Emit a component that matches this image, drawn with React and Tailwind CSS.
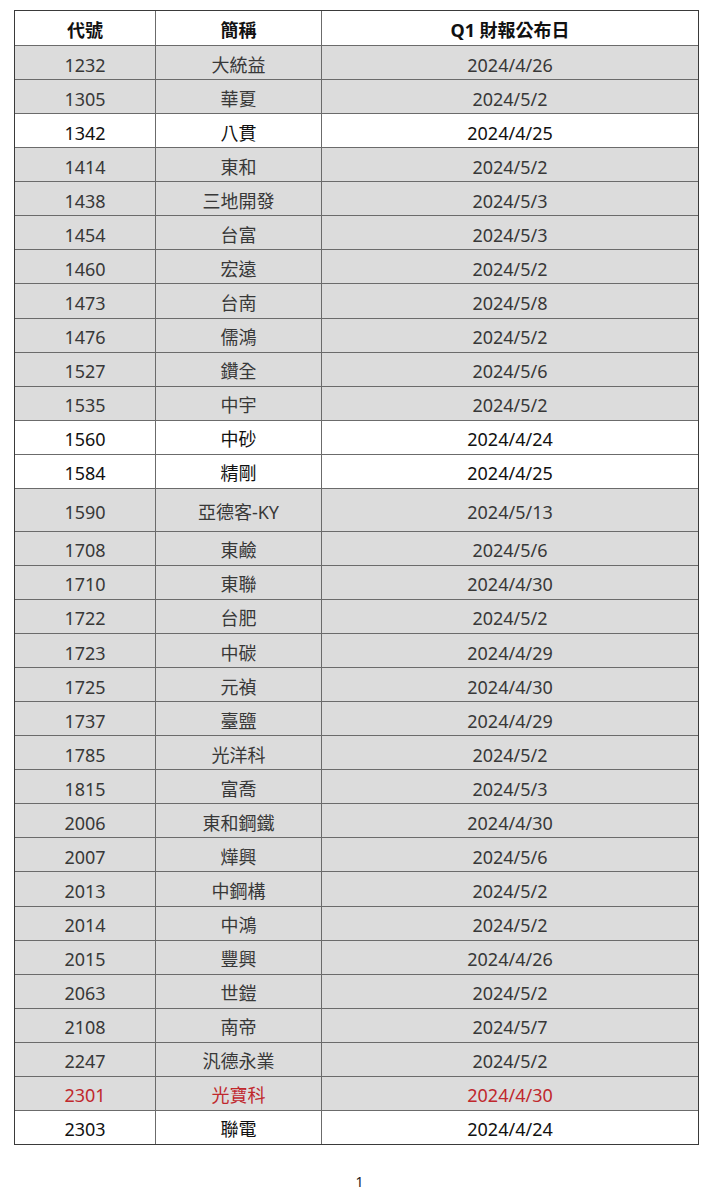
import React from "react"

const rows = [
  ["1232", "大統益", "2024/4/26", "g"],
  ["1305", "華夏", "2024/5/2", "g"],
  ["1342", "八貫", "2024/4/25", "w"],
  ["1414", "東和", "2024/5/2", "g"],
  ["1438", "三地開發", "2024/5/3", "g"],
  ["1454", "台富", "2024/5/3", "g"],
  ["1460", "宏遠", "2024/5/2", "g"],
  ["1473", "台南", "2024/5/8", "g"],
  ["1476", "儒鴻", "2024/5/2", "g"],
  ["1527", "鑽全", "2024/5/6", "g"],
  ["1535", "中宇", "2024/5/2", "g"],
  ["1560", "中砂", "2024/4/24", "w"],
  ["1584", "精剛", "2024/4/25", "w"],
  ["1590", "亞德客-KY", "2024/5/13", "g"],
  ["1708", "東鹼", "2024/5/6", "g"],
  ["1710", "東聯", "2024/4/30", "g"],
  ["1722", "台肥", "2024/5/2", "g"],
  ["1723", "中碳", "2024/4/29", "g"],
  ["1725", "元禎", "2024/4/30", "g"],
  ["1737", "臺鹽", "2024/4/29", "g"],
  ["1785", "光洋科", "2024/5/2", "g"],
  ["1815", "富喬", "2024/5/3", "g"],
  ["2006", "東和鋼鐵", "2024/4/30", "g"],
  ["2007", "燁興", "2024/5/6", "g"],
  ["2013", "中鋼構", "2024/5/2", "g"],
  ["2014", "中鴻", "2024/5/2", "g"],
  ["2015", "豐興", "2024/4/26", "g"],
  ["2063", "世鎧", "2024/5/2", "g"],
  ["2108", "南帝", "2024/5/7", "g"],
  ["2247", "汎德永業", "2024/5/2", "g"],
  ["2301", "光寶科", "2024/4/30", "r"],
  ["2303", "聯電", "2024/4/24", "w"],
]

const font = { fontFamily: '"Noto Sans", "Noto Sans CJK TC", sans-serif' }

const App = () => {
  return (
    <div className="min-h-[1203px] w-[719px] bg-white pt-[10px]" style={font}>
      <div className="mx-[14px] w-[685px] border border-[#3a3a3a]">
        <div className="grid h-[34px] grid-cols-[141px_166px_1fr] items-center bg-white text-[18px] font-bold text-[#111]">
          <div className="flex h-full items-center justify-center border-r border-[#6b6b6b] pt-[5px]">代號</div>
          <div className="flex h-full items-center justify-center border-r border-[#6b6b6b] pt-[5px]">簡稱</div>
          <div className="flex h-full items-center justify-center pt-[5px]">Q1 財報公布日</div>
        </div>
        {rows.map(([code, name, date, kind]) => (
          <div
            key={code}
            className={`grid grid-cols-[141px_166px_1fr] items-center border-t border-[#6b6b6b] text-[18px] ${
              code === "1590" ? "h-[43px]" : "h-[34.07px]"
            } ${kind === "w" ? "bg-white text-[#111]" : "bg-[#dcdcdc] text-[#383838]"} ${
              kind === "r" ? "text-[#c0282d]" : ""
            }`}
          >
            <div className="flex h-full items-center justify-center border-r border-[#6b6b6b] pt-[5px]">{code}</div>
            <div className="flex h-full items-center justify-center border-r border-[#6b6b6b] pt-[5px]">{name}</div>
            <div className="flex h-full items-center justify-center pt-[5px]">{date}</div>
          </div>
        ))}
      </div>
      <div className="mt-[26px] text-center text-[14px] text-[#222]">1</div>
    </div>
  )
}

export default App
